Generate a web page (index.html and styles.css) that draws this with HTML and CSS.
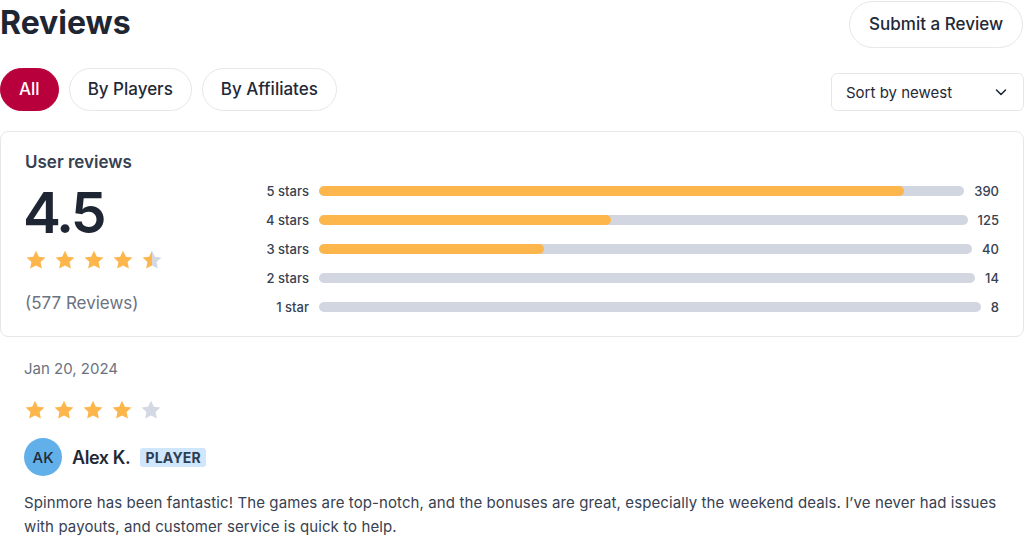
FILE: index.html
```html
<!doctype html>
<html>
<head>
<meta charset="utf-8">
<title>Reviews</title>
<link rel="stylesheet" href="styles.css">
</head>
<body>
<svg width="0" height="0" class="defs">
	<defs>
		<symbol id="star" viewBox="0 0 24 24"><path d="M12 1.8l3.1 6.6 7.2.9-5.3 5 1.4 7.1L12 17.9l-6.4 3.5 1.4-7.1-5.3-5 7.2-.9z"/></symbol>
		<linearGradient id="half"><stop offset="50%" stop-color="#fdb64c"/><stop offset="50%" stop-color="#d3d8e2"/></linearGradient>
	</defs>
</svg>
<div class="page">
	<div class="top">
		<h1>Reviews</h1>
		<a href="#" class="btn-submit">Submit a Review</a>
	</div>
	<div class="toolbar">
		<div class="tabs">
			<a href="#" class="tab active">All</a>
			<a href="#" class="tab">By Players</a>
			<a href="#" class="tab">By Affiliates</a>
		</div>
		<div class="sort">
			<span>Sort by newest</span>
			<svg width="16" height="16" viewBox="0 0 16 16"><path d="M3.5 6l4.5 4.5L12.5 6" fill="none" stroke="#1f2937" stroke-width="1.6" stroke-linecap="round" stroke-linejoin="round"/></svg>
		</div>
	</div>

	<div class="summary">
		<div class="score">
			<h2>User reviews</h2>
			<div class="big">4.5</div>
			<div class="stars">
				<svg class="on"><use href="#star"/></svg>
				<svg class="on"><use href="#star"/></svg>
				<svg class="on"><use href="#star"/></svg>
				<svg class="on"><use href="#star"/></svg>
				<svg class="halfstar"><use href="#star"/></svg>
			</div>
			<div class="total">(577 Reviews)</div>
		</div>
		<div class="bars">
			<div class="row"><span class="lbl">5 stars</span><div class="track"><div class="fill" style="width:90.7%"></div></div><span class="num">390</span></div>
			<div class="row"><span class="lbl">4 stars</span><div class="track"><div class="fill" style="width:45%"></div></div><span class="num">125</span></div>
			<div class="row"><span class="lbl">3 stars</span><div class="track"><div class="fill" style="width:34.4%"></div></div><span class="num">40</span></div>
			<div class="row"><span class="lbl">2 stars</span><div class="track"><div class="fill" style="width:0%"></div></div><span class="num">14</span></div>
			<div class="row"><span class="lbl">1 star</span><div class="track"><div class="fill" style="width:0%"></div></div><span class="num">8</span></div>
		</div>
	</div>

	<div class="review">
		<div class="date">Jan 20, 2024</div>
		<div class="stars">
			<svg class="on"><use href="#star"/></svg>
			<svg class="on"><use href="#star"/></svg>
			<svg class="on"><use href="#star"/></svg>
			<svg class="on"><use href="#star"/></svg>
			<svg class="off"><use href="#star"/></svg>
		</div>
		<div class="author">
			<span class="avatar">AK</span>
			<span class="name">Alex K.</span>
			<span class="badge">PLAYER</span>
		</div>
		<p>Spinmore has been fantastic! The games are top-notch, and the bonuses are great, especially the weekend deals. I’ve never had issues with payouts, and customer service is quick to help.</p>
	</div>
</div>
</body>
</html>
```

FILE: styles.css
```css
* {padding:0;margin:0;box-sizing:border-box;}
body {font-family:Inter,"Noto Sans",sans-serif;color:#1f2937;background:#fff;}
a {text-decoration:none;color:inherit;}
.defs {position:absolute;}

.page {width:1024px;}
.top {display:flex;
	justify-content:space-between;
	align-items:flex-start;
}
h1 {font-size:32px;
	font-weight:700;
	color:#1e2633;
	line-height:46px;
}
.btn-submit {display:inline-block;
	height:47px;
	line-height:45px;
	padding:0 19px;
	margin-top:1px;
	margin-right:1px;
	border:1px solid #e5e7eb;
	border-radius:24px;
	font-size:17px;
	font-weight:500;
	color:#1f2937;
}

.toolbar {display:flex;
	justify-content:space-between;
	align-items:center;
	margin-top:20px;
}
.tabs {display:flex;gap:10px;}
.tab {height:43px;
	line-height:41px;
	padding:0 18px;
	border:1px solid #e5e7eb;
	border-radius:22px;
	font-size:17px;
	font-weight:500;
	color:#1f2937;
}
.tab.active {background:#b8003c;border-color:#b8003c;color:#fff;}
.sort {display:flex;
	align-items:center;
	justify-content:space-between;
	width:193px;
	height:38px;
	padding:0 14px;
	margin-top:5px;
	border:1px solid #e5e7eb;
	border-radius:6px;
	font-size:15px;
	color:#1f2937;
}

.summary {display:flex;
	margin-top:20px;
	padding:19px 24px 22px 24px;
	border:1px solid #e5e7eb;
	border-radius:8px;
	height:206px;
}
.score {width:228px;}
h2 {font-size:17px;font-weight:600;color:#374151;line-height:22px;}
.big {font-size:57px;
	font-weight:600;
	color:#1e2633;
	line-height:58px;
	margin-top:11px;
	margin-left:-2px;
	letter-spacing:-3px;
}
.stars {display:flex;gap:7px;margin-top:7px;}
.stars svg {width:22px;height:22px;}
.stars .on {fill:#fdb64c;}
.stars .off {fill:#d3d8e2;}
.stars .halfstar {fill:url(#half);}
.total {font-size:17px;color:#6b7280;margin-top:22px;line-height:21px;}

.bars {flex:1;padding-top:25px;}
.row {display:flex;align-items:center;height:29px;}
.lbl {width:56px;text-align:right;font-size:13px;font-weight:500;color:#374151;}
.track {flex:1;height:10px;margin:0 10px;background:#d1d6e0;border-radius:5px;overflow:hidden;}
.fill {height:100%;background:#fdb64c;border-radius:5px;}
.num {font-size:13px;font-weight:500;color:#374151;}

.review {padding:22px 24px 0 24px;}
.date {font-size:15px;color:#6b7280;line-height:20px;}
.review .stars {margin-top:20px;}
.author {display:flex;align-items:center;margin-top:17px;}
.avatar {display:flex;
	align-items:center;
	justify-content:center;
	width:38px;
	height:38px;
	border-radius:50%;
	background:#62b0ea;
	font-size:15px;
	font-weight:500;
	color:#1f2937;
}
.name {font-size:18px;font-weight:600;color:#1f2937;margin-left:10px;letter-spacing:-0.4px;}
.badge {margin-left:10px;
	padding:1px 5px;
	background:#cfe6fb;
	border-radius:3px;
	font-size:14px;
	font-weight:700;
	color:#2c3e55;
	letter-spacing:0.2px;
}
.review p {margin-top:15px;font-size:15px;line-height:24px;color:#374151;letter-spacing:0.1px;}
```
